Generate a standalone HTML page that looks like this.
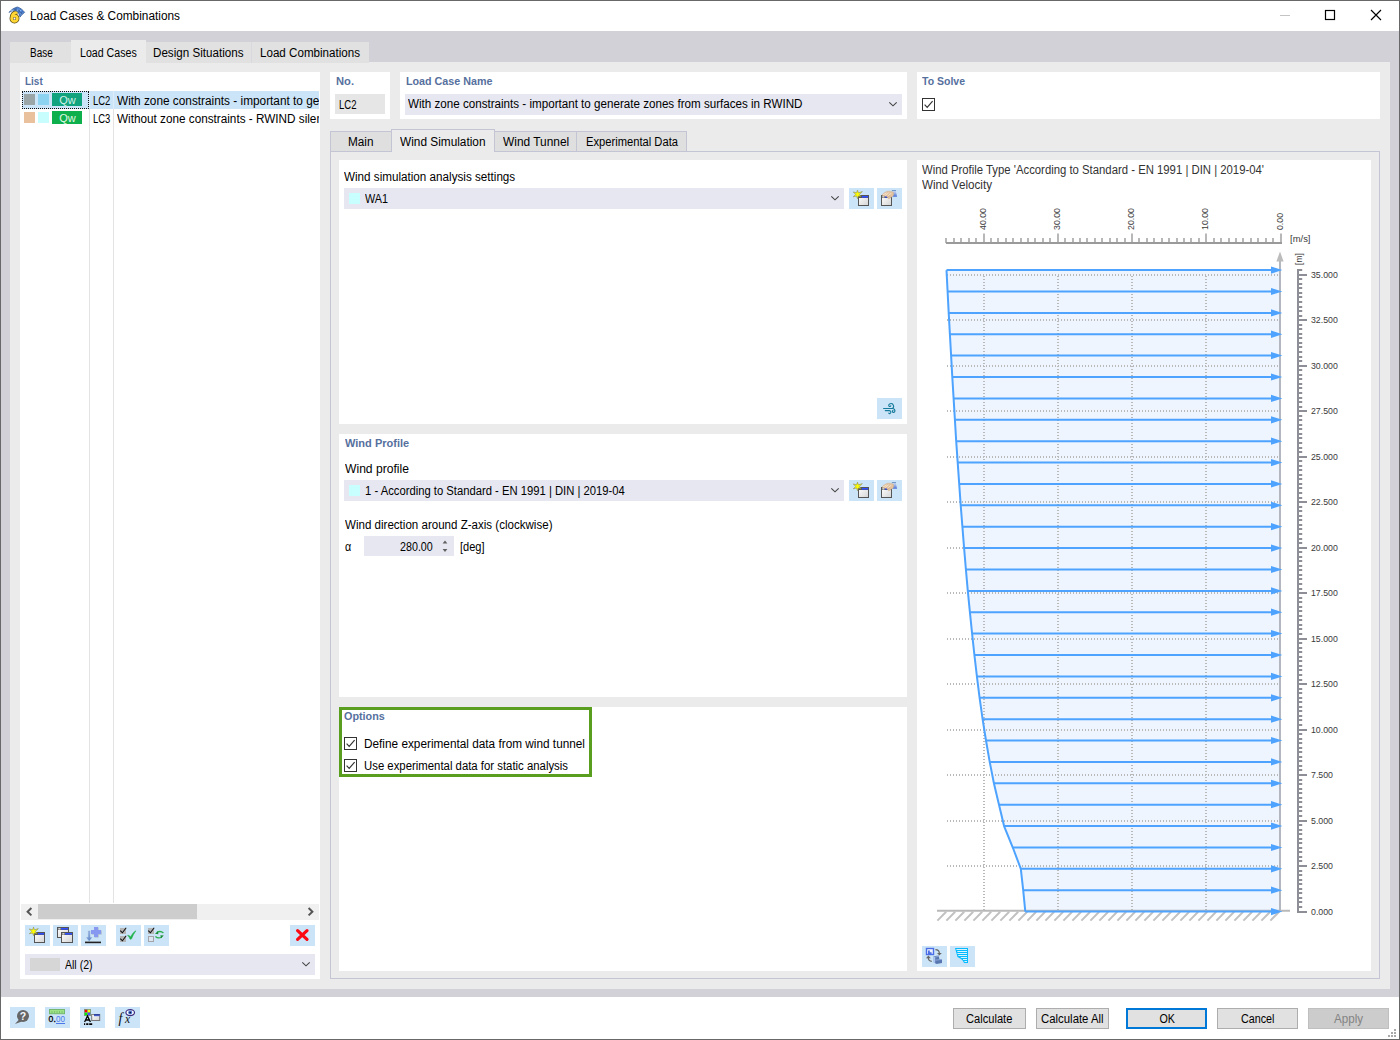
<!DOCTYPE html>
<html><head><meta charset="utf-8"><title>Load Cases &amp; Combinations</title>
<style>
*{box-sizing:border-box;margin:0;padding:0}
html,body{width:1400px;height:1040px;overflow:hidden;background:#fff}
body{font-family:"Liberation Sans",sans-serif;font-size:12px;color:#000;position:relative}
.a{position:absolute}
.t{position:absolute;white-space:nowrap;line-height:14px;height:14px;transform-origin:0 50%}
.b{font-weight:bold;color:#56709e;font-size:11.5px}
.w{background:#fff}
.cb{background:#e6e7f1}
.ib{background:#cce4f7}
.tab{position:absolute;background:#dfdfdf;border:1px solid #c4c5d4;border-bottom:none;text-align:center}
.btn{position:absolute;top:1008px;height:21px;background:#e1e1e1;border:1px solid #adadad;text-align:center;line-height:19px}
.btn .t{top:1px}
.chk{position:absolute;width:13px;height:13px;border:1px solid #333;background:#fff}
svg{position:absolute;overflow:visible}
</style></head><body>
<!-- window frame -->
<div class="a" style="left:0;top:0;width:1400px;height:1040px;border:1px solid #686868"></div>
<!-- title -->
<div class="t" id="ttl" style="left:30.0px;top:9px;font-size:12.5px;transform:scaleX(0.9467)">Load Cases &amp; Combinations</div>
<svg style="left:6px;top:4px" width="22" height="22" viewBox="6 4 22 22">
<path d="M17.600 12.300 C13.600 12 11.600 14.800 11.600 18.500 A2.900 2.900 0 1 0 17.400 18.500 A2.900 2.900 0 1 0 11.600 18.500" fill="none" stroke="#4e4218" stroke-width="4.100" stroke-linecap="butt"/>
<path d="M17.600 12.300 C13.600 12 11.600 14.800 11.600 18.500 A2.900 2.900 0 1 0 17.400 18.500 A2.900 2.900 0 1 0 11.600 18.500" fill="none" stroke="#ffd633" stroke-width="2.700" stroke-linecap="butt"/>
<circle cx="14.500" cy="18.500" r=".9" fill="#fafafa"/>
<path d="M9 12.400 C11.500 9.500 14.500 7.600 17.500 7 C20.500 8 23 10 24.600 12.400 C22.800 13.600 21.200 15.200 20 17.100 C19.400 14.600 18.600 12.600 17 11.200 C15 10 12 10.600 9 12.400 Z" fill="#4f87da" stroke="#3f5f96" stroke-width=".8" stroke-linejoin="round"/>
<path d="M12.800 9.300 C16 8.600 19.600 10.400 21.600 14.200 M15.600 10.600 L16.400 7.600 M18.600 12.600 L20.200 8.800 M19.600 15.400 L22.600 11" fill="none" stroke="#36558c" stroke-width=".7"/>
<path d="M11 11 L13.600 9.800 M16.800 9.600 L18.200 10.600 M19.600 9.800 L20.800 10.800 M20.200 13.400 L20.800 14.400" stroke="#9cc6f4" stroke-width="1" fill="none"/>
</svg>
<svg style="left:1275px;top:5px" width="115" height="22" viewBox="0 0 115 22">
<path d="M5 10.5 h10" stroke="#c4c4c4" stroke-width="1"/>
<rect x="50.5" y="5.500" width="9" height="9" fill="none" stroke="#000" stroke-width="1.2"/>
<path d="M96 5 l10 10 M106 5 l-10 10" stroke="#000" stroke-width="1.15"/>
</svg>
<!-- gray band -->
<div class="a" style="left:1px;top:31px;width:1398px;height:966px;background:#d2d1d7"></div>
<!-- main tabs -->
<div class="a" style="left:10px;top:62px;width:1380px;height:927px;background:#ebebeb"></div>
<div class="a" style="left:10px;top:42px;width:61px;height:21px;background:#e1e1e1"></div>
<div class="a" style="left:146px;top:42px;width:106px;height:21px;background:#e1e1e1"></div>
<div class="a" style="left:251px;top:42px;width:118px;height:21px;background:#e1e1e1;border-left:1px solid #d8d8de"></div>
<div class="a" style="left:71px;top:40px;width:75px;height:24px;background:#ebebeb"></div>
<div class="t" id="mt1" style="left:30.3px;top:46px;transform:scaleX(0.8297)">Base</div>
<div class="t" id="mt2" style="left:80.0px;top:46px;transform:scaleX(0.8853)">Load Cases</div>
<div class="t" id="mt3" style="left:153.2px;top:46px;transform:scaleX(0.9690)">Design Situations</div>
<div class="t" id="mt4" style="left:260.0px;top:46px;transform:scaleX(0.9671)">Load Combinations</div>

<!-- list panel -->
<div class="a w" style="left:20px;top:72px;width:300px;height:907px"></div>
<div class="t b" id="lb1" style="left:25.3px;top:74px;transform:scaleX(0.8654)">List</div>
<div class="a" style="left:89px;top:91px;width:1px;height:812px;background:#e3e3e3"></div>
<div class="a" style="left:113px;top:91px;width:1px;height:812px;background:#e3e3e3"></div>
<div class="a" style="left:22px;top:91px;width:297px;height:18px;background:#cce4f7"></div>
<div class="a" style="left:89px;top:91px;width:1px;height:18px;background:#dcecf8"></div>
<div class="a" style="left:113px;top:91px;width:1px;height:18px;background:#dcecf8"></div>
<div class="a" style="left:22px;top:91px;width:67px;height:18px;border:1px dotted #111"></div>
<div class="a" style="left:24px;top:94px;width:11px;height:11px;background:#9aa5a7"></div>
<div class="a" style="left:38px;top:94px;width:11px;height:11px;background:#8bd3f0"></div>
<div class="a" style="left:52px;top:93px;width:30px;height:13px;background:#10a37e"></div>
<div class="t" style="left:59.2px;top:93.4px;color:#d4f1e8;font-size:11px;letter-spacing:-.1px">Qw</div>
<div class="a" style="left:24px;top:112px;width:11px;height:11px;background:#e9c19c"></div>
<div class="a" style="left:38px;top:112px;width:11px;height:11px;background:#c7fdfd"></div>
<div class="a" style="left:52px;top:111px;width:30px;height:13px;background:#0eb04d"></div>
<div class="t" style="left:59.2px;top:111.4px;color:#e0f7e2;font-size:11px;letter-spacing:-.1px">Qw</div>
<div class="t" id="l1a" style="left:93.4px;top:94px;transform:scaleX(0.7903)">LC2</div>
<div class="a" style="left:117px;top:91px;width:202px;height:36px;overflow:hidden">
<div class="t" id="l1b" style="left:0.2px;top:3px;transform:scaleX(0.9852)">With zone constraints - important to generate</div>
<div class="t" id="l2b" style="left:0.2px;top:21px;transform:scaleX(0.9782)">Without zone constraints - RWIND silent</div>
</div>
<div class="t" id="l2a" style="left:93.4px;top:112px;transform:scaleX(0.7903)">LC3</div>
<!-- scrollbar -->
<div class="a" style="left:21px;top:904px;width:298px;height:16px;background:#f0f0f0"></div>
<div class="a" style="left:38px;top:904px;width:159px;height:15px;background:#cdcdcd"></div>
<svg style="left:21px;top:904px" width="298" height="16" viewBox="0 0 298 16"><path d="M10.400 4 L6.600 7.700 L10.400 11.400 M287.600 4 L291.400 7.700 L287.600 11.400" fill="none" stroke="#555" stroke-width="2"/></svg>
<!-- list toolbar -->
<div class="a ib" style="left:25px;top:925px;width:25px;height:21px"></div>
<div class="a ib" style="left:53px;top:925px;width:25px;height:21px"></div>
<div class="a ib" style="left:81px;top:925px;width:25px;height:21px"></div>
<div class="a ib" style="left:116px;top:925px;width:25px;height:21px"></div>
<div class="a ib" style="left:144px;top:925px;width:25px;height:21px"></div>
<div class="a ib" style="left:290px;top:925px;width:25px;height:21px"></div>
<svg width="0" height="0" style="left:0;top:0"><defs>
<linearGradient id="gw" x1="0" y1="0" x2="1" y2="1"><stop offset="0" stop-color="#ffffff"/><stop offset="1" stop-color="#d4d4d4"/></linearGradient>
<linearGradient id="ga" x1="0" y1="0" x2="0" y2="1"><stop offset="0" stop-color="#9db8e4"/><stop offset="1" stop-color="#5f86c8"/></linearGradient>
<linearGradient id="gt" x1="0" y1="0" x2="0" y2="1"><stop offset="0" stop-color="#1a2a9a"/><stop offset="1" stop-color="#5a78d8"/></linearGradient>
<linearGradient id="gs" x1="0" y1="0" x2="0" y2="1"><stop offset="0" stop-color="#d4dcf2"/><stop offset="1" stop-color="#4870d6"/></linearGradient>
</defs></svg>
<svg style="left:25px;top:925px" width="25" height="21" viewBox="0 0 25 21"><rect x="9.5" y="7.5" width="10" height="10" fill="url(#gw)" stroke="#555" stroke-width="1"/><rect x="10" y="8" width="9" height="2" fill="#555"/><rect x="13" y="8" width="6" height="1.6" fill="#3050ff"/><polygon points="8.50,2.10 9.40,4.84 13.35,3.60 10.30,6.40 11.96,8.40 9.40,7.96 8.50,10.70 7.60,7.96 4.26,8.85 6.70,6.40 4.26,3.95 7.60,4.84" fill="#ffff00" stroke="#8c8c60" stroke-width=".6" stroke-linejoin="miter"/></svg>
<svg style="left:53px;top:925px" width="25" height="21" viewBox="0 0 25 21"><rect x="4.5" y="2.5" width="11" height="10" fill="url(#gw)" stroke="#555" stroke-width="1"/><rect x="5" y="3" width="10" height="2" fill="#555"/><rect x="5.3" y="3.2" width="2.2" height="1.3" fill="#f4f4f4"/><rect x="8" y="3" width="7" height="1.6" fill="#3050ff"/><rect x="8.5" y="7.5" width="11" height="10" fill="url(#gw)" stroke="#555" stroke-width="1"/><rect x="9" y="8" width="10" height="2" fill="#555"/><rect x="9.3" y="8.2" width="2.2" height="1.3" fill="#f4f4f4"/><rect x="12" y="8" width="7" height="1.6" fill="#3050ff"/></svg>
<svg style="left:81px;top:925px" width="25" height="21" viewBox="0 0 25 21"><path d="M13.600 2.600 h4 v3 h3 v4 h-3 v3 h-4 v-3 h-3 v-4 h3 z" fill="#8c8c9c" opacity=".55"/><path d="M13 2 h4 v3 h3 v4 h-3 v3 h-4 v-3 h-3 v-4 h3 z" fill="#8698f0"/><path d="M7.400 6 h1.600 v6.500 h1.800 l-2.600 3.600 l-2.600 -3.600 h1.800 z" fill="url(#ga)" stroke="#6a8ac4" stroke-width=".3"/><rect x="4" y="16.600" width="16" height="1.600" fill="#222"/></svg>
<svg style="left:116px;top:925px" width="25" height="21" viewBox="0 0 25 21"><rect x="4" y="3" width="6" height="6" fill="#b4b4b4"/><path d="M4.3 5.6 L6.4 7.8 L10.2 2.8" fill="none" stroke="#111" stroke-width="1.05"/><rect x="4" y="11" width="6" height="6" fill="#b4b4b4"/><path d="M4.3 13.6 L6.4 15.8 L10.2 10.8" fill="none" stroke="#111" stroke-width="1.05"/><path d="M11.600 10.300 C12.800 10.200 13.800 11 14.600 12 C15.800 9.500 17.500 7.300 19.800 5.800 C18 8.200 16.600 11 15.400 14 L14.200 14.200 C13.600 12.800 12.800 11.400 11.600 10.300 Z" fill="#1eb24a" stroke="#1eb24a" stroke-width=".6" stroke-linejoin="round"/></svg>
<svg style="left:144px;top:925px" width="25" height="21" viewBox="0 0 25 21"><rect x="4" y="3" width="6" height="6" fill="#b4b4b4"/><path d="M4.3 5.6 L6.4 7.8 L10.2 2.8" fill="none" stroke="#111" stroke-width="1.05"/><rect x="4.500" y="11.500" width="5" height="5" fill="#dbe6f2" stroke="#a4a4a8" stroke-width="1"/><path d="M19.400 8 C17.600 6.300 14.800 6.300 13 7.400" fill="none" stroke="#2cb04e" stroke-width="1.300"/><path d="M11 8.800 L13.800 6.200 L14.400 9.200 Z" fill="#178a34"/><path d="M11.400 11.600 C13.200 13.100 16 13.100 17.800 12" fill="none" stroke="#2cb04e" stroke-width="1.300"/><path d="M19.800 10.400 L17 13.200 L16.400 10.200 Z" fill="#178a34"/></svg>
<svg style="left:290px;top:925px" width="25" height="21" viewBox="0 0 25 21"><path d="M7.600 5.600 L17 14.400 M17 5.600 L7.600 14.400" stroke="#fb0a14" stroke-width="3.200" stroke-linecap="round" fill="none"/></svg>

<div class="a cb" style="left:25px;top:954px;width:290px;height:21px"></div>
<div class="a" style="left:30px;top:958px;width:30px;height:13px;background:#d6d6d6"></div>
<div class="t" id="all2" style="left:65.0px;top:958px;transform:scaleX(0.8774)">All (2)</div>
<svg style="left:300px;top:960px" width="12" height="8" viewBox="0 0 12 8"><path d="M2.300 2.300 L6 5.800 L9.700 2.300" fill="none" stroke="#444" stroke-width="1.1"/></svg>

<!-- No. -->
<div class="a w" style="left:330px;top:72px;width:60px;height:47px"></div>
<div class="t b" id="lb2" style="left:335.5px;top:74px;transform:scaleX(0.9713)">No.</div>
<div class="a" style="left:335px;top:94px;width:50px;height:20px;background:#e6e6e6"></div>
<div class="t" id="no" style="left:338.7px;top:98px;transform:scaleX(0.7949)">LC2</div>
<!-- name -->
<div class="a w" style="left:400px;top:72px;width:507px;height:47px"></div>
<div class="t b" id="lb3" style="left:405.5px;top:74px;transform:scaleX(0.9332)">Load Case Name</div>
<div class="a cb" style="left:405px;top:94px;width:497px;height:21px"></div>
<div class="t" id="nm" style="left:408.0px;top:97px;transform:scaleX(0.9686)">With zone constraints - important to generate zones from surfaces in RWIND</div>
<svg style="left:887px;top:100px" width="12" height="8" viewBox="0 0 12 8"><path d="M2.300 2.300 L6 5.800 L9.700 2.300" fill="none" stroke="#444" stroke-width="1.1"/></svg>
<!-- to solve -->
<div class="a w" style="left:917px;top:72px;width:463px;height:47px"></div>
<div class="t b" id="lb4" style="left:922.0px;top:74px;transform:scaleX(0.9134)">To Solve</div>
<div class="chk" style="left:922px;top:98px"></div>
<svg style="left:922px;top:98px" width="13" height="13" viewBox="0 0 13 13"><path d="M2.600 6.600 L5.200 9.300 L10.600 3.200" fill="none" stroke="#333" stroke-width="1.2"/></svg>

<!-- inner tabs -->
<div class="a" style="left:330px;top:151px;width:1050px;height:828px;border:1px solid #c4c5d4;background:#ebebeb"></div>
<div class="tab" style="left:330px;top:131px;width:62px;height:20px"></div>
<div class="tab" style="left:494px;top:131px;width:83px;height:20px"></div>
<div class="tab" style="left:576px;top:131px;width:111px;height:20px"></div>
<div class="tab" style="left:391px;top:129px;width:104px;height:23px;background:#ebebeb"></div>
<div class="t" id="it1" style="left:348.2px;top:135px;transform:scaleX(0.9802)">Main</div>
<div class="t" id="it2" style="left:400.0px;top:135px;transform:scaleX(0.9861)">Wind Simulation</div>
<div class="t" id="it3" style="left:502.5px;top:135px;transform:scaleX(0.9925)">Wind Tunnel</div>
<div class="t" id="it4" style="left:585.5px;top:135px;transform:scaleX(0.9319)">Experimental Data</div>

<!-- panel A -->
<div class="a w" style="left:339px;top:160px;width:568px;height:264px"></div>
<div class="t" id="pa1" style="left:344.2px;top:170px;transform:scaleX(0.9723)">Wind simulation analysis settings</div>
<div class="a cb" style="left:344px;top:188px;width:500px;height:21px"></div>
<div class="a" style="left:349px;top:193px;width:11px;height:11px;background:#c8ffff"></div>
<div class="t" id="pa2" style="left:365.0px;top:192px;transform:scaleX(0.8998)">WA1</div>
<svg style="left:829px;top:194px" width="12" height="8" viewBox="0 0 12 8"><path d="M2.300 2.300 L6 5.800 L9.700 2.300" fill="none" stroke="#444" stroke-width="1.1"/></svg>
<div class="a ib" style="left:849px;top:188px;width:25px;height:21px"></div>
<div class="a ib" style="left:877px;top:188px;width:25px;height:21px"></div>
<div class="a ib" style="left:877px;top:398px;width:25px;height:21px"></div>
<!-- panel B -->
<div class="a w" style="left:339px;top:434px;width:568px;height:263px"></div>
<div class="t b" id="lb5" style="left:344.5px;top:436px;transform:scaleX(0.9584)">Wind Profile</div>
<div class="t" id="pb1" style="left:344.5px;top:462px;transform:scaleX(1.0101)">Wind profile</div>
<div class="a cb" style="left:344px;top:480px;width:500px;height:21px"></div>
<div class="a" style="left:349px;top:485px;width:11px;height:11px;background:#c8ffff"></div>
<div class="t" id="pb2" style="left:365.2px;top:484px;transform:scaleX(0.9377)">1 - According to Standard - EN 1991 | DIN | 2019-04</div>
<svg style="left:829px;top:486px" width="12" height="8" viewBox="0 0 12 8"><path d="M2.300 2.300 L6 5.800 L9.700 2.300" fill="none" stroke="#444" stroke-width="1.1"/></svg>
<div class="a ib" style="left:849px;top:480px;width:25px;height:21px"></div>
<div class="a ib" style="left:877px;top:480px;width:25px;height:21px"></div>
<div class="t" id="pb3" style="left:344.5px;top:518px;transform:scaleX(0.9633)">Wind direction around Z-axis (clockwise)</div>
<div class="t" id="pb4" style="left:344.9px;top:540px;transform:scaleX(0.8937)">α</div>
<div class="a cb" style="left:364px;top:536px;width:90px;height:20px"></div>
<div class="t" id="pb5" style="left:400.1px;top:540px;transform:scaleX(0.8937)">280.00</div>
<svg style="left:441.400px;top:540px" width="8" height="13" viewBox="0 0 8 13"><path d="M1.600 3.500 L4 0.400 L6.400 3.500 Z M1.600 9.100 L4 11.900 L6.400 9.100 Z" fill="#606060"/></svg>
<div class="t" id="pb6" style="left:459.7px;top:540px;transform:scaleX(0.9212)">[deg]</div>
<!-- panel C -->
<div class="a w" style="left:339px;top:707px;width:568px;height:264px"></div>
<div class="a" style="left:339px;top:707px;width:253px;height:70px;border:3px solid #5a9e1f"></div>
<div class="t b" id="lb6" style="left:344.2px;top:709px;transform:scaleX(0.9389)">Options</div>
<div class="chk" style="left:344px;top:737px"></div>
<svg style="left:344px;top:737px" width="13" height="13" viewBox="0 0 13 13"><path d="M2.600 6.600 L5.200 9.300 L10.600 3.200" fill="none" stroke="#333" stroke-width="1.2"/></svg>
<div class="t" id="pc1" style="left:363.6px;top:737px;transform:scaleX(0.9831)">Define experimental data from wind tunnel</div>
<div class="chk" style="left:344px;top:759px"></div>
<svg style="left:344px;top:759px" width="13" height="13" viewBox="0 0 13 13"><path d="M2.600 6.600 L5.200 9.300 L10.600 3.200" fill="none" stroke="#333" stroke-width="1.2"/></svg>
<div class="t" id="pc2" style="left:363.6px;top:759px;transform:scaleX(0.9469)">Use experimental data for static analysis</div>

<!-- chart panel -->
<div class="a w" style="left:917px;top:160px;width:454px;height:811px"></div>
<div class="t" id="ch1" style="left:922.1px;top:163px;color:#333;transform:scaleX(0.9444)">Wind Profile Type 'According to Standard - EN 1991 | DIN | 2019-04'</div>
<div class="t" id="ch2" style="left:922.1px;top:178px;color:#333;transform:scaleX(0.9718)">Wind Velocity</div>
<svg class="chart" width="1400" height="1040" viewBox="0 0 1400 1040" style="position:absolute;left:0;top:0;font-family:'Liberation Sans',sans-serif">
<polygon points="1280,911.6 1025.3,911.6 1023.2,890.2 1020.8,868.8 1012.8,847.5 1004.1,826.1 999.0,804.7 993.9,783.3 989.7,761.9 986.0,740.5 982.6,719.2 979.6,697.8 976.9,676.4 974.4,655.0 972.1,633.6 969.9,612.2 967.8,590.9 965.9,569.5 964.1,548.1 962.4,526.7 960.7,505.3 959.2,483.9 957.7,462.6 956.2,441.2 954.9,419.8 953.6,398.4 952.3,377.0 951.1,355.6 949.9,334.2 948.7,312.9 947.6,291.5 946.5,270.1 1280,270.1" fill="#eef5ff"/>
<line x1="947" y1="866" x2="1279" y2="866" stroke="#b9b9b9" stroke-width="2" stroke-dasharray="1 2"/>
<line x1="947" y1="821" x2="1279" y2="821" stroke="#b9b9b9" stroke-width="2" stroke-dasharray="1 2"/>
<line x1="947" y1="775" x2="1279" y2="775" stroke="#b9b9b9" stroke-width="2" stroke-dasharray="1 2"/>
<line x1="947" y1="730" x2="1279" y2="730" stroke="#b9b9b9" stroke-width="2" stroke-dasharray="1 2"/>
<line x1="947" y1="684" x2="1279" y2="684" stroke="#b9b9b9" stroke-width="2" stroke-dasharray="1 2"/>
<line x1="947" y1="639" x2="1279" y2="639" stroke="#b9b9b9" stroke-width="2" stroke-dasharray="1 2"/>
<line x1="947" y1="593" x2="1279" y2="593" stroke="#b9b9b9" stroke-width="2" stroke-dasharray="1 2"/>
<line x1="947" y1="548" x2="1279" y2="548" stroke="#b9b9b9" stroke-width="2" stroke-dasharray="1 2"/>
<line x1="947" y1="502" x2="1279" y2="502" stroke="#b9b9b9" stroke-width="2" stroke-dasharray="1 2"/>
<line x1="947" y1="457" x2="1279" y2="457" stroke="#b9b9b9" stroke-width="2" stroke-dasharray="1 2"/>
<line x1="947" y1="411" x2="1279" y2="411" stroke="#b9b9b9" stroke-width="2" stroke-dasharray="1 2"/>
<line x1="947" y1="366" x2="1279" y2="366" stroke="#b9b9b9" stroke-width="2" stroke-dasharray="1 2"/>
<line x1="947" y1="320" x2="1279" y2="320" stroke="#b9b9b9" stroke-width="2" stroke-dasharray="1 2"/>
<line x1="947" y1="275" x2="1279" y2="275" stroke="#b9b9b9" stroke-width="2" stroke-dasharray="1 2"/>
<line x1="1206" y1="276" x2="1206" y2="910" stroke="#b9b9b9" stroke-width="2" stroke-dasharray="1 2"/>
<line x1="1132" y1="276" x2="1132" y2="910" stroke="#b9b9b9" stroke-width="2" stroke-dasharray="1 2"/>
<line x1="1058" y1="276" x2="1058" y2="910" stroke="#b9b9b9" stroke-width="2" stroke-dasharray="1 2"/>
<line x1="984" y1="276" x2="984" y2="910" stroke="#b9b9b9" stroke-width="2" stroke-dasharray="1 2"/>
<line x1="937" y1="910.7" x2="1290" y2="910.7" stroke="#b9b9b9" stroke-width="2"/>
<path d="M946.2 911.8 l-8.8 8.8 M955.2 911.8 l-8.8 8.8 M964.2 911.8 l-8.8 8.8 M973.2 911.8 l-8.8 8.8 M982.2 911.8 l-8.8 8.8 M991.2 911.8 l-8.8 8.8 M1000.2 911.8 l-8.8 8.8 M1009.2 911.8 l-8.8 8.8 M1018.2 911.8 l-8.8 8.8 M1027.2 911.8 l-8.8 8.8 M1036.2 911.8 l-8.8 8.8 M1045.2 911.8 l-8.8 8.8 M1054.2 911.8 l-8.8 8.8 M1063.2 911.8 l-8.8 8.8 M1072.2 911.8 l-8.8 8.8 M1081.2 911.8 l-8.8 8.8 M1090.2 911.8 l-8.8 8.8 M1099.2 911.8 l-8.8 8.8 M1108.2 911.8 l-8.8 8.8 M1117.2 911.8 l-8.8 8.8 M1126.2 911.8 l-8.8 8.8 M1135.2 911.8 l-8.8 8.8 M1144.2 911.8 l-8.8 8.8 M1153.2 911.8 l-8.8 8.8 M1162.2 911.8 l-8.8 8.8 M1171.2 911.8 l-8.8 8.8 M1180.2 911.8 l-8.8 8.8 M1189.2 911.8 l-8.8 8.8 M1198.2 911.8 l-8.8 8.8 M1207.2 911.8 l-8.8 8.8 M1216.2 911.8 l-8.8 8.8 M1225.2 911.8 l-8.8 8.8 M1234.2 911.8 l-8.8 8.8 M1243.2 911.8 l-8.8 8.8 M1252.2 911.8 l-8.8 8.8 M1261.2 911.8 l-8.8 8.8 M1270.2 911.8 l-8.8 8.8 M1279.2 911.8 l-8.8 8.8" stroke="#c1c1c1" stroke-width="2" fill="none"/>
<line x1="1280" y1="258" x2="1280" y2="911.6" stroke="#b3b7bf" stroke-width="2"/>
<polygon points="1280,251.5 1283.6,261.5 1276.4,261.5" fill="#bcbcbc"/>
<polyline points="1025.3,911.6 1023.2,890.2 1020.8,868.8 1012.8,847.5 1004.1,826.1 999.0,804.7 993.9,783.3 989.7,761.9 986.0,740.5 982.6,719.2 979.6,697.8 976.9,676.4 974.4,655.0 972.1,633.6 969.9,612.2 967.8,590.9 965.9,569.5 964.1,548.1 962.4,526.7 960.7,505.3 959.2,483.9 957.7,462.6 956.2,441.2 954.9,419.8 953.6,398.4 952.3,377.0 951.1,355.6 949.9,334.2 948.7,312.9 947.6,291.5 946.5,270.1" fill="none" stroke="#4da3ff" stroke-width="2" stroke-linejoin="miter"/>
<line x1="1025.3" y1="911.6" x2="1273" y2="911.6" stroke="#4da3ff" stroke-width="2"/>
<polygon points="1282.4,911.6 1271,908.0 1271,915.2" fill="#4da3ff"/>
<line x1="1023.2" y1="890.2" x2="1273" y2="890.2" stroke="#4da3ff" stroke-width="2"/>
<polygon points="1282.4,890.2 1271,886.6 1271,893.8" fill="#4da3ff"/>
<line x1="1020.8" y1="868.8" x2="1273" y2="868.8" stroke="#4da3ff" stroke-width="2"/>
<polygon points="1282.4,868.8 1271,865.2 1271,872.4" fill="#4da3ff"/>
<line x1="1012.8" y1="847.5" x2="1273" y2="847.5" stroke="#4da3ff" stroke-width="2"/>
<polygon points="1282.4,847.5 1271,843.9 1271,851.1" fill="#4da3ff"/>
<line x1="1004.1" y1="826.1" x2="1273" y2="826.1" stroke="#4da3ff" stroke-width="2"/>
<polygon points="1282.4,826.1 1271,822.5 1271,829.7" fill="#4da3ff"/>
<line x1="999.0" y1="804.7" x2="1273" y2="804.7" stroke="#4da3ff" stroke-width="2"/>
<polygon points="1282.4,804.7 1271,801.1 1271,808.3" fill="#4da3ff"/>
<line x1="993.9" y1="783.3" x2="1273" y2="783.3" stroke="#4da3ff" stroke-width="2"/>
<polygon points="1282.4,783.3 1271,779.7 1271,786.9" fill="#4da3ff"/>
<line x1="989.7" y1="761.9" x2="1273" y2="761.9" stroke="#4da3ff" stroke-width="2"/>
<polygon points="1282.4,761.9 1271,758.3 1271,765.5" fill="#4da3ff"/>
<line x1="986.0" y1="740.5" x2="1273" y2="740.5" stroke="#4da3ff" stroke-width="2"/>
<polygon points="1282.4,740.5 1271,736.9 1271,744.1" fill="#4da3ff"/>
<line x1="982.6" y1="719.2" x2="1273" y2="719.2" stroke="#4da3ff" stroke-width="2"/>
<polygon points="1282.4,719.2 1271,715.6 1271,722.8" fill="#4da3ff"/>
<line x1="979.6" y1="697.8" x2="1273" y2="697.8" stroke="#4da3ff" stroke-width="2"/>
<polygon points="1282.4,697.8 1271,694.2 1271,701.4" fill="#4da3ff"/>
<line x1="976.9" y1="676.4" x2="1273" y2="676.4" stroke="#4da3ff" stroke-width="2"/>
<polygon points="1282.4,676.4 1271,672.8 1271,680.0" fill="#4da3ff"/>
<line x1="974.4" y1="655.0" x2="1273" y2="655.0" stroke="#4da3ff" stroke-width="2"/>
<polygon points="1282.4,655.0 1271,651.4 1271,658.6" fill="#4da3ff"/>
<line x1="972.1" y1="633.6" x2="1273" y2="633.6" stroke="#4da3ff" stroke-width="2"/>
<polygon points="1282.4,633.6 1271,630.0 1271,637.2" fill="#4da3ff"/>
<line x1="969.9" y1="612.2" x2="1273" y2="612.2" stroke="#4da3ff" stroke-width="2"/>
<polygon points="1282.4,612.2 1271,608.6 1271,615.8" fill="#4da3ff"/>
<line x1="967.8" y1="590.9" x2="1273" y2="590.9" stroke="#4da3ff" stroke-width="2"/>
<polygon points="1282.4,590.9 1271,587.2 1271,594.5" fill="#4da3ff"/>
<line x1="965.9" y1="569.5" x2="1273" y2="569.5" stroke="#4da3ff" stroke-width="2"/>
<polygon points="1282.4,569.5 1271,565.9 1271,573.1" fill="#4da3ff"/>
<line x1="964.1" y1="548.1" x2="1273" y2="548.1" stroke="#4da3ff" stroke-width="2"/>
<polygon points="1282.4,548.1 1271,544.5 1271,551.7" fill="#4da3ff"/>
<line x1="962.4" y1="526.7" x2="1273" y2="526.7" stroke="#4da3ff" stroke-width="2"/>
<polygon points="1282.4,526.7 1271,523.1 1271,530.3" fill="#4da3ff"/>
<line x1="960.7" y1="505.3" x2="1273" y2="505.3" stroke="#4da3ff" stroke-width="2"/>
<polygon points="1282.4,505.3 1271,501.7 1271,508.9" fill="#4da3ff"/>
<line x1="959.2" y1="483.9" x2="1273" y2="483.9" stroke="#4da3ff" stroke-width="2"/>
<polygon points="1282.4,483.9 1271,480.3 1271,487.5" fill="#4da3ff"/>
<line x1="957.7" y1="462.6" x2="1273" y2="462.6" stroke="#4da3ff" stroke-width="2"/>
<polygon points="1282.4,462.6 1271,458.9 1271,466.2" fill="#4da3ff"/>
<line x1="956.2" y1="441.2" x2="1273" y2="441.2" stroke="#4da3ff" stroke-width="2"/>
<polygon points="1282.4,441.2 1271,437.6 1271,444.8" fill="#4da3ff"/>
<line x1="954.9" y1="419.8" x2="1273" y2="419.8" stroke="#4da3ff" stroke-width="2"/>
<polygon points="1282.4,419.8 1271,416.2 1271,423.4" fill="#4da3ff"/>
<line x1="953.6" y1="398.4" x2="1273" y2="398.4" stroke="#4da3ff" stroke-width="2"/>
<polygon points="1282.4,398.4 1271,394.8 1271,402.0" fill="#4da3ff"/>
<line x1="952.3" y1="377.0" x2="1273" y2="377.0" stroke="#4da3ff" stroke-width="2"/>
<polygon points="1282.4,377.0 1271,373.4 1271,380.6" fill="#4da3ff"/>
<line x1="951.1" y1="355.6" x2="1273" y2="355.6" stroke="#4da3ff" stroke-width="2"/>
<polygon points="1282.4,355.6 1271,352.0 1271,359.2" fill="#4da3ff"/>
<line x1="949.9" y1="334.2" x2="1273" y2="334.2" stroke="#4da3ff" stroke-width="2"/>
<polygon points="1282.4,334.2 1271,330.6 1271,337.9" fill="#4da3ff"/>
<line x1="948.7" y1="312.9" x2="1273" y2="312.9" stroke="#4da3ff" stroke-width="2"/>
<polygon points="1282.4,312.9 1271,309.3 1271,316.5" fill="#4da3ff"/>
<line x1="947.6" y1="291.5" x2="1273" y2="291.5" stroke="#4da3ff" stroke-width="2"/>
<polygon points="1282.4,291.5 1271,287.9 1271,295.1" fill="#4da3ff"/>
<line x1="946.5" y1="270.1" x2="1273" y2="270.1" stroke="#4da3ff" stroke-width="2"/>
<polygon points="1282.4,270.1 1271,266.5 1271,273.7" fill="#4da3ff"/>
<line x1="946" y1="243" x2="1282" y2="243" stroke="#9a9a9a" stroke-width="2"/>
<path d="M1281 243 v-9.5 M1273 243 v-5 M1266 243 v-5 M1258 243 v-5 M1251 243 v-5 M1243 243 v-5 M1236 243 v-5 M1229 243 v-5 M1221 243 v-5 M1214 243 v-5 M1206 243 v-9.5 M1199 243 v-5 M1191 243 v-5 M1184 243 v-5 M1177 243 v-5 M1169 243 v-5 M1162 243 v-5 M1154 243 v-5 M1147 243 v-5 M1139 243 v-5 M1132 243 v-9.5 M1125 243 v-5 M1117 243 v-5 M1110 243 v-5 M1102 243 v-5 M1095 243 v-5 M1087 243 v-5 M1080 243 v-5 M1073 243 v-5 M1065 243 v-5 M1058 243 v-9.5 M1050 243 v-5 M1043 243 v-5 M1035 243 v-5 M1028 243 v-5 M1021 243 v-5 M1013 243 v-5 M1006 243 v-5 M998 243 v-5 M991 243 v-5 M984 243 v-9.5 M976 243 v-5 M969 243 v-5 M961 243 v-5 M954 243 v-5 M946 243 v-5" stroke="#9a9a9a" stroke-width="1.4" fill="none"/>
<text transform="translate(1283.2,230) rotate(-90)" font-size="9.1" fill="#3a3a3a" textLength="17" lengthAdjust="spacingAndGlyphs">0.00</text>
<text transform="translate(1208.2,230) rotate(-90)" font-size="9.1" fill="#3a3a3a" textLength="22" lengthAdjust="spacingAndGlyphs">10.00</text>
<text transform="translate(1134.2,230) rotate(-90)" font-size="9.1" fill="#3a3a3a" textLength="22" lengthAdjust="spacingAndGlyphs">20.00</text>
<text transform="translate(1060.2,230) rotate(-90)" font-size="9.1" fill="#3a3a3a" textLength="22" lengthAdjust="spacingAndGlyphs">30.00</text>
<text transform="translate(986.2,230) rotate(-90)" font-size="9.1" fill="#3a3a3a" textLength="22" lengthAdjust="spacingAndGlyphs">40.00</text>
<text x="1290" y="242" font-size="9.1" fill="#3a3a3a" textLength="20.5" lengthAdjust="spacingAndGlyphs">[m/s]</text>
<text transform="translate(1302.3,265) rotate(-90)" font-size="9.1" fill="#3a3a3a" textLength="12" lengthAdjust="spacingAndGlyphs">[m]</text>
<line x1="1298" y1="269" x2="1298" y2="913" stroke="#8e8e96" stroke-width="2"/>
<path d="M1298 912 h9 M1298 907 h4.2 M1298 902 h4.2 M1298 898 h4.2 M1298 893 h4.2 M1298 889 h4.2 M1298 884 h4.2 M1298 880 h4.2 M1298 875 h4.2 M1298 871 h4.2 M1298 866 h9 M1298 861 h4.2 M1298 857 h4.2 M1298 852 h4.2 M1298 848 h4.2 M1298 843 h4.2 M1298 839 h4.2 M1298 834 h4.2 M1298 830 h4.2 M1298 825 h4.2 M1298 821 h9 M1298 816 h4.2 M1298 811 h4.2 M1298 807 h4.2 M1298 802 h4.2 M1298 798 h4.2 M1298 793 h4.2 M1298 789 h4.2 M1298 784 h4.2 M1298 780 h4.2 M1298 775 h9 M1298 770 h4.2 M1298 766 h4.2 M1298 761 h4.2 M1298 757 h4.2 M1298 752 h4.2 M1298 748 h4.2 M1298 743 h4.2 M1298 739 h4.2 M1298 734 h4.2 M1298 730 h9 M1298 725 h4.2 M1298 720 h4.2 M1298 716 h4.2 M1298 711 h4.2 M1298 707 h4.2 M1298 702 h4.2 M1298 698 h4.2 M1298 693 h4.2 M1298 689 h4.2 M1298 684 h9 M1298 680 h4.2 M1298 675 h4.2 M1298 670 h4.2 M1298 666 h4.2 M1298 661 h4.2 M1298 657 h4.2 M1298 652 h4.2 M1298 648 h4.2 M1298 643 h4.2 M1298 639 h9 M1298 634 h4.2 M1298 629 h4.2 M1298 625 h4.2 M1298 620 h4.2 M1298 616 h4.2 M1298 611 h4.2 M1298 607 h4.2 M1298 602 h4.2 M1298 598 h4.2 M1298 593 h9 M1298 589 h4.2 M1298 584 h4.2 M1298 579 h4.2 M1298 575 h4.2 M1298 570 h4.2 M1298 566 h4.2 M1298 561 h4.2 M1298 557 h4.2 M1298 552 h4.2 M1298 548 h9 M1298 543 h4.2 M1298 539 h4.2 M1298 534 h4.2 M1298 529 h4.2 M1298 525 h4.2 M1298 520 h4.2 M1298 516 h4.2 M1298 511 h4.2 M1298 507 h4.2 M1298 502 h9 M1298 498 h4.2 M1298 493 h4.2 M1298 488 h4.2 M1298 484 h4.2 M1298 479 h4.2 M1298 475 h4.2 M1298 470 h4.2 M1298 466 h4.2 M1298 461 h4.2 M1298 457 h9 M1298 452 h4.2 M1298 448 h4.2 M1298 443 h4.2 M1298 438 h4.2 M1298 434 h4.2 M1298 429 h4.2 M1298 425 h4.2 M1298 420 h4.2 M1298 416 h4.2 M1298 411 h9 M1298 407 h4.2 M1298 402 h4.2 M1298 398 h4.2 M1298 393 h4.2 M1298 388 h4.2 M1298 384 h4.2 M1298 379 h4.2 M1298 375 h4.2 M1298 370 h4.2 M1298 366 h9 M1298 361 h4.2 M1298 357 h4.2 M1298 352 h4.2 M1298 347 h4.2 M1298 343 h4.2 M1298 338 h4.2 M1298 334 h4.2 M1298 329 h4.2 M1298 325 h4.2 M1298 320 h9 M1298 316 h4.2 M1298 311 h4.2 M1298 307 h4.2 M1298 302 h4.2 M1298 297 h4.2 M1298 293 h4.2 M1298 288 h4.2 M1298 284 h4.2 M1298 279 h4.2 M1298 275 h9 M1298 270 h4.2" stroke="#8e8e96" stroke-width="2" fill="none"/>
<text x="1311" y="914.7" font-size="9.1" fill="#3a3a3a" textLength="22" lengthAdjust="spacingAndGlyphs">0.000</text>
<text x="1311" y="868.7" font-size="9.1" fill="#3a3a3a" textLength="22" lengthAdjust="spacingAndGlyphs">2.500</text>
<text x="1311" y="823.7" font-size="9.1" fill="#3a3a3a" textLength="22" lengthAdjust="spacingAndGlyphs">5.000</text>
<text x="1311" y="777.7" font-size="9.1" fill="#3a3a3a" textLength="22" lengthAdjust="spacingAndGlyphs">7.500</text>
<text x="1311" y="732.7" font-size="9.1" fill="#3a3a3a" textLength="26.8" lengthAdjust="spacingAndGlyphs">10.000</text>
<text x="1311" y="686.7" font-size="9.1" fill="#3a3a3a" textLength="26.8" lengthAdjust="spacingAndGlyphs">12.500</text>
<text x="1311" y="641.7" font-size="9.1" fill="#3a3a3a" textLength="26.8" lengthAdjust="spacingAndGlyphs">15.000</text>
<text x="1311" y="595.7" font-size="9.1" fill="#3a3a3a" textLength="26.8" lengthAdjust="spacingAndGlyphs">17.500</text>
<text x="1311" y="550.7" font-size="9.1" fill="#3a3a3a" textLength="26.8" lengthAdjust="spacingAndGlyphs">20.000</text>
<text x="1311" y="504.7" font-size="9.1" fill="#3a3a3a" textLength="26.8" lengthAdjust="spacingAndGlyphs">22.500</text>
<text x="1311" y="459.7" font-size="9.1" fill="#3a3a3a" textLength="26.8" lengthAdjust="spacingAndGlyphs">25.000</text>
<text x="1311" y="413.7" font-size="9.1" fill="#3a3a3a" textLength="26.8" lengthAdjust="spacingAndGlyphs">27.500</text>
<text x="1311" y="368.7" font-size="9.1" fill="#3a3a3a" textLength="26.8" lengthAdjust="spacingAndGlyphs">30.000</text>
<text x="1311" y="322.7" font-size="9.1" fill="#3a3a3a" textLength="26.8" lengthAdjust="spacingAndGlyphs">32.500</text>
<text x="1311" y="277.7" font-size="9.1" fill="#3a3a3a" textLength="26.8" lengthAdjust="spacingAndGlyphs">35.000</text>
</svg>
<div class="a ib" style="left:922px;top:946px;width:25px;height:21px"></div>
<div class="a ib" style="left:950px;top:946px;width:25px;height:21px"></div>

<svg style="left:849px;top:188px" width="25" height="21" viewBox="0 0 25 21"><rect x="9.5" y="7.5" width="10" height="10" fill="url(#gw)" stroke="#555" stroke-width="1"/><rect x="10" y="8" width="9" height="2" fill="#555"/><rect x="13" y="8" width="6" height="1.6" fill="#3050ff"/><polygon points="8.50,2.10 9.40,4.84 13.35,3.60 10.30,6.40 11.96,8.40 9.40,7.96 8.50,10.70 7.60,7.96 4.26,8.85 6.70,6.40 4.26,3.95 7.60,4.84" fill="#ffff00" stroke="#8c8c60" stroke-width=".6" stroke-linejoin="miter"/></svg>
<svg style="left:877px;top:188px" width="25" height="21" viewBox="0 0 25 21"><rect x="4.5" y="7.5" width="10" height="10" fill="url(#gw)" stroke="#555" stroke-width="1"/><rect x="5" y="8" width="9" height="2" fill="#555"/><rect x="5.3" y="8.2" width="2.2" height="1.3" fill="#f4f4f4"/><rect x="8" y="8" width="6" height="1.6" fill="#3050ff"/><path d="M16.600 3 L18.800 3 L20.100 8.700 L15.400 8.700 Z" fill="url(#gs)"/><path d="M14.900 2.600 H19" stroke="#5a86be" stroke-width=".9"/><path d="M5 7.300 C5.300 6 7.600 4.300 10 3.400 C12 2.900 14.500 3.300 16.200 4 C16.800 5.200 16.900 6.600 16.400 7.600 C15.800 8.400 15 8.900 14.200 9.200 C13.400 10 12.500 10.800 11.500 10.700 C10.700 10 10.300 9 9.600 8.200 C8 8.300 6.400 8.200 5 7.300 Z" fill="#e2c29e" stroke="#c9a784" stroke-width=".4"/><path d="M6.200 6.800 L9.200 5 M8.400 7.300 L11.400 5 M11.400 8 L13.800 5.400" stroke="#f7ead8" stroke-width=".8" fill="none" stroke-linecap="round"/><path d="M11.200 9.400 L12.800 7.400" stroke="#c09a72" stroke-width=".6" fill="none"/></svg>
<svg style="left:877px;top:398px" width="25" height="21" viewBox="0 0 25 21"><g fill="none" stroke="#157a9b" stroke-width="1.150" stroke-linecap="round" stroke-linejoin="round"><path d="M6.600 10.500 H14.800 C16.300 10.500 16.900 8.900 16.500 7.600 C16 6 14.500 5.300 13.200 5.700 C11.900 6.100 11.400 7.300 12 8.100 C12.600 8.800 13.500 8.500 13.700 7.800"/><path d="M15.400 10.500 C17 10.700 18 11.800 17.900 13 C17.800 14.200 16.700 14.800 15.800 14.300 C15.100 13.900 15.200 12.900 16 12.600"/><path d="M8.300 12.600 H12.200 C13.400 12.600 14 13.600 13.700 14.700 C13.400 15.700 12.300 15.900 11.800 15.200"/></g></svg>
<svg style="left:849px;top:480px" width="25" height="21" viewBox="0 0 25 21"><rect x="9.5" y="7.5" width="10" height="10" fill="url(#gw)" stroke="#555" stroke-width="1"/><rect x="10" y="8" width="9" height="2" fill="#555"/><rect x="13" y="8" width="6" height="1.6" fill="#3050ff"/><polygon points="8.50,2.10 9.40,4.84 13.35,3.60 10.30,6.40 11.96,8.40 9.40,7.96 8.50,10.70 7.60,7.96 4.26,8.85 6.70,6.40 4.26,3.95 7.60,4.84" fill="#ffff00" stroke="#8c8c60" stroke-width=".6" stroke-linejoin="miter"/></svg>
<svg style="left:877px;top:480px" width="25" height="21" viewBox="0 0 25 21"><rect x="4.5" y="7.5" width="10" height="10" fill="url(#gw)" stroke="#555" stroke-width="1"/><rect x="5" y="8" width="9" height="2" fill="#555"/><rect x="5.3" y="8.2" width="2.2" height="1.3" fill="#f4f4f4"/><rect x="8" y="8" width="6" height="1.6" fill="#3050ff"/><path d="M16.600 3 L18.800 3 L20.100 8.700 L15.400 8.700 Z" fill="url(#gs)"/><path d="M14.900 2.600 H19" stroke="#5a86be" stroke-width=".9"/><path d="M5 7.300 C5.300 6 7.600 4.300 10 3.400 C12 2.900 14.500 3.300 16.200 4 C16.800 5.200 16.900 6.600 16.400 7.600 C15.800 8.400 15 8.900 14.200 9.200 C13.400 10 12.500 10.800 11.500 10.700 C10.700 10 10.300 9 9.600 8.200 C8 8.300 6.400 8.200 5 7.300 Z" fill="#e2c29e" stroke="#c9a784" stroke-width=".4"/><path d="M6.200 6.800 L9.200 5 M8.400 7.300 L11.400 5 M11.400 8 L13.800 5.400" stroke="#f7ead8" stroke-width=".8" fill="none" stroke-linecap="round"/><path d="M11.200 9.400 L12.800 7.400" stroke="#c09a72" stroke-width=".6" fill="none"/></svg>
<svg style="left:922px;top:946px" width="25" height="21" viewBox="0 0 25 21"><rect x="4.500" y="2.500" width="7" height="6" fill="#eef2ff" stroke="#4a6ee6" stroke-width="1.400"/><path d="M6 8 V4.500 H7.800 V6.200 H9.600 V8 Z" fill="#4a6ee6"/><path d="M13.400 3.600 C15.800 3.600 17.300 5.200 17.400 7.400" fill="none" stroke="#666" stroke-width="1.200"/><path d="M15 7 H19.800 L17.400 9.600 Z" fill="#666"/><path d="M9.800 15.400 C7.600 15.300 6.400 13.800 6.300 11.800" fill="none" stroke="#666" stroke-width="1.200"/><path d="M4 12.200 H8.800 L6.400 9.600 Z" fill="#666"/><path d="M11.600 10.200 L16.800 9.600 L17.400 13.200 L20 13 L20 17 L14.600 18 L11.800 16.600 Z" fill="#5876b0"/><path d="M11.600 10.200 L13.200 11 L13.200 17.300 L11.800 16.600 Z" fill="#aac6f2"/><path d="M13.200 11 L16.800 10.400 M13.400 14.200 L20 13.400" stroke="#9ab4e4" stroke-width=".8"/></svg>
<svg style="left:950px;top:946px" width="25" height="21" viewBox="0 0 25 21"><path d="M5 2 H18 V17 H14 C13 14 11 12.500 7.500 11 Z" fill="#06baff"/><rect x="6.4" y="3.1" width="10.6" height=".9" fill="#f2faff"/><rect x="7.3" y="5.1" width="9.7" height=".9" fill="#f2faff"/><rect x="7.4" y="7.1" width="9.6" height=".9" fill="#f2faff"/><rect x="8.3" y="9.1" width="8.7" height=".9" fill="#f2faff"/><rect x="10.8" y="11.1" width="6.199999999999999" height=".9" fill="#f2faff"/><rect x="13" y="13.1" width="4" height=".9" fill="#f2faff"/><rect x="14.4" y="15.1" width="2.5999999999999996" height=".9" fill="#f2faff"/></svg>

<!-- bottom bar -->
<div class="a ib" style="left:10px;top:1007px;width:25px;height:21px"></div>
<div class="a ib" style="left:45px;top:1007px;width:25px;height:21px"></div>
<div class="a ib" style="left:80px;top:1007px;width:25px;height:21px"></div>
<div class="a ib" style="left:115px;top:1007px;width:25px;height:21px"></div>
<svg style="left:10px;top:1007px" width="25" height="21" viewBox="0 0 25 21"><circle cx="13" cy="8.900" r="6" fill="#666"/><path d="M9 12.500 L5 17 L11.800 14.400 Z" fill="#666"/><text x="13" y="12.700" font-size="10.500" font-weight="bold" fill="#f4f8fc" text-anchor="middle" font-family="Liberation Sans,sans-serif">?</text></svg>
<svg style="left:45px;top:1007px" width="25" height="21" viewBox="0 0 25 21"><rect x="4.500" y="2.500" width="15" height="4.200" fill="#9ee287" stroke="#74b870" stroke-width="1"/><path d="M7 4 v2.500 M9.500 4 v2.500 M12 4 v2.500 M14.500 4 v2.500 M17 4 v2.500" stroke="#78c070" stroke-width=".9"/><text x="3.600" y="15.200" font-size="9.800" fill="#000" font-family="Liberation Sans,sans-serif" textLength="7.200" lengthAdjust="spacingAndGlyphs" stroke="#000" stroke-width=".3">0.</text><text x="11" y="15.200" font-size="9.800" fill="#4a78ea" font-family="Liberation Sans,sans-serif" textLength="9" lengthAdjust="spacingAndGlyphs">00</text><rect x="11" y="16" width="9" height="1" fill="#4a78ea"/></svg>
<svg style="left:80px;top:1007px" width="25" height="21" viewBox="0 0 25 21"><rect x="4" y="2" width="7" height="7" fill="#7e9e80"/><rect x="4.800" y="2.800" width="2.300" height="2.300" fill="#ff0000"/><rect x="7.800" y="2.800" width="2.300" height="2.300" fill="#ffff00"/><rect x="4.800" y="5.900" width="2.300" height="2.300" fill="#00ee00"/><rect x="7.800" y="5.900" width="2.300" height="2.300" fill="#4a4aff"/><path d="M4.600 15 L7.500 9 L10.400 15 M5.700 13 H9.300" fill="none" stroke="#000" stroke-width="1.300"/><path d="M4 16.300 h1.200 v1.700 h-1.200 z M6.200 16.300 h2.200 v1.700 h-2.200 z M9.200 16.300 h3 v1.700 h-3 z" fill="#000"/><rect x="11.700" y="7.500" width="8" height="6" fill="url(#gw)" stroke="#757575" stroke-width="1"/><rect x="14" y="7.200" width="5.800" height="2" fill="url(#gt)"/><rect x="12.200" y="7.800" width="1.600" height="1.300" fill="#e8e8e8"/></svg>
<svg style="left:115px;top:1007px" width="25" height="21" viewBox="0 0 25 21"><text x="3.600" y="16" font-size="14" font-style="italic" fill="#111" font-family="Liberation Serif,serif">f</text><text x="10" y="16" font-size="11.500" font-style="italic" fill="#111" font-family="Liberation Serif,serif">x</text><ellipse cx="15.200" cy="5.600" rx="4.300" ry="3" fill="#fff" stroke="#3c2c80" stroke-width="1.200"/><circle cx="15.200" cy="5.600" r="2" fill="#4676d8"/><circle cx="15.200" cy="5.600" r=".9" fill="#10102a"/></svg>

<div class="btn" style="left:953px;width:73px"><span class="t" id="b1" style="position:relative;display:inline-block;transform-origin:50% 50%;transform:translateX(0.2px) scaleX(0.9254)">Calculate</span></div>
<div class="btn" style="left:1036px;width:73px"><span class="t" id="b2" style="position:relative;display:inline-block;transform-origin:50% 50%;transform:translateX(0.3px) scaleX(0.9463)">Calculate All</span></div>
<div class="btn" style="left:1126px;width:81px;border:2px solid #0078d7;line-height:17px"><span class="t" id="b3" style="position:relative;display:inline-block;top:1px;transform-origin:50% 50%;transform:translateX(0.5px) scaleX(0.8937)">OK</span></div>
<div class="btn" style="left:1217px;width:81px"><span class="t" id="b4" style="position:relative;display:inline-block;transform-origin:50% 50%;transform:translateX(0.0px) scaleX(0.8967)">Cancel</span></div>
<div class="btn" style="left:1308px;width:81px;background:#cccccc;border-color:#bfbfbf;color:#838383"><span class="t" id="b5" style="position:relative;display:inline-block;transform-origin:50% 50%;transform:translateX(0.5px) scaleX(0.9657)">Apply</span></div>
<svg style="left:1388px;top:1029px" width="8" height="8" viewBox="0 0 8 8"><path d="M6 0h2v2h-2z M3 3h2v2h-2z M6 3h2v2h-2z M0 6h2v2h-2z M3 6h2v2h-2z M6 6h2v2h-2z" fill="#a9a9a9"/></svg>
</body></html>
